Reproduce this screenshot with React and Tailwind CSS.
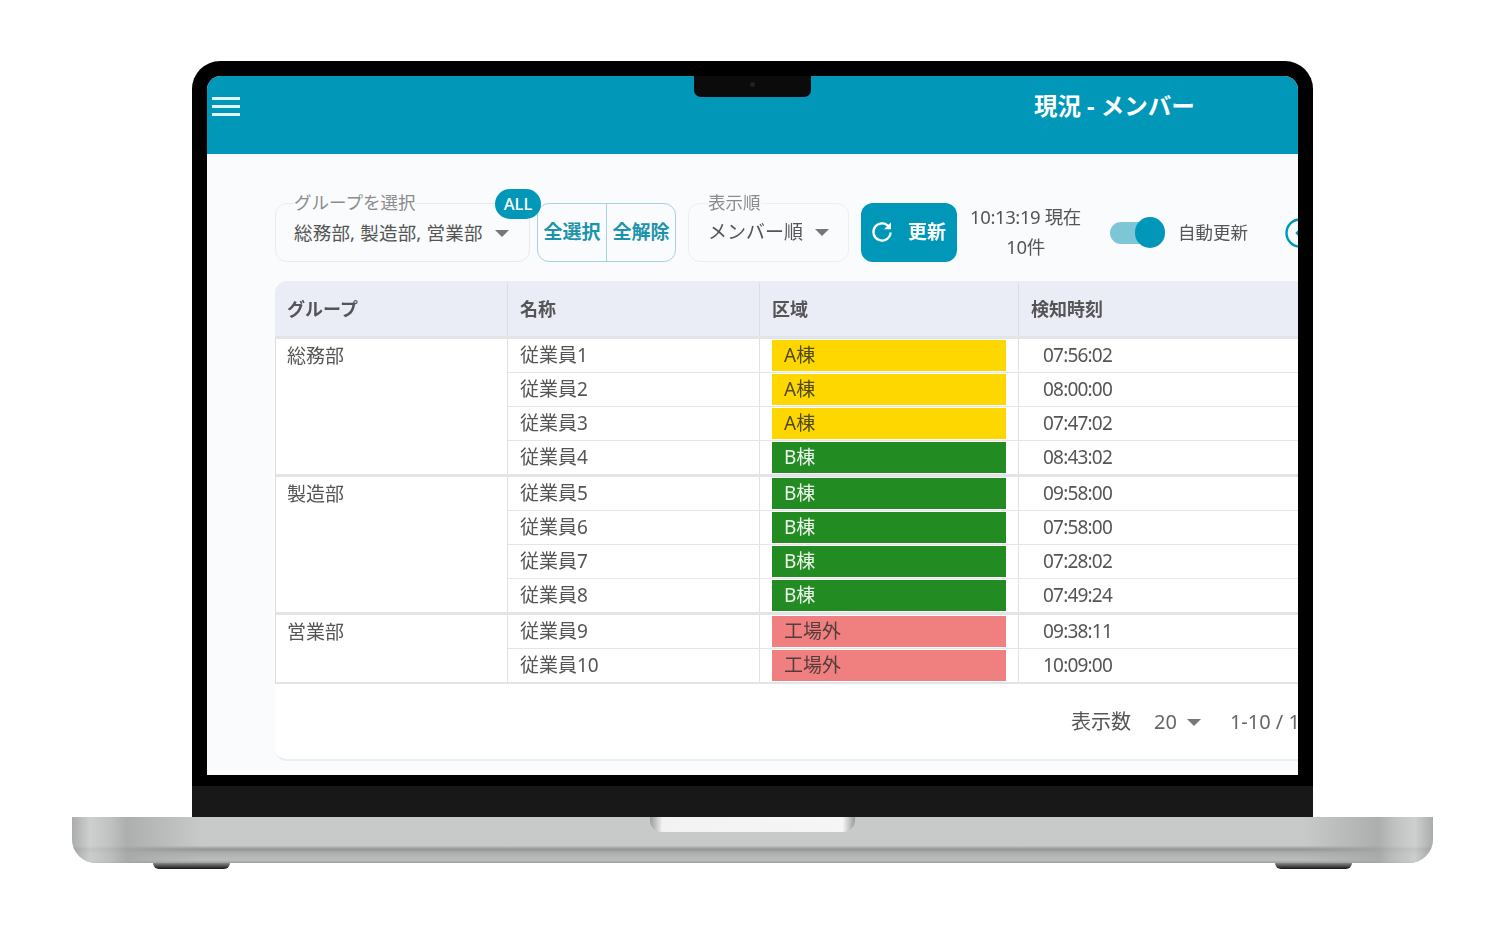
const rows = [
  { group: '総務部', items: [['従業員1','A棟','a','07:56:02'],['従業員2','A棟','a','08:00:00'],['従業員3','A棟','a','07:47:02'],['従業員4','B棟','b','08:43:02']] },
  { group: '製造部', items: [['従業員5','B棟','b','09:58:00'],['従業員6','B棟','b','07:58:00'],['従業員7','B棟','b','07:28:02'],['従業員8','B棟','b','07:49:24']] },
  { group: '営業部', items: [['従業員9','工場外','c','09:38:11'],['従業員10','工場外','c','10:09:00']] },
];

function Caret() {
  return <span className="block w-0 h-0 border-x-[7px] border-x-transparent border-t-[7px] border-t-[#777] shrink-0" />;
}

function Area({ kind, label }) {
  if (kind === 'a') return <div className="w-full h-full flex items-center pl-3 bg-[#ffd700] text-[#4f4a1e]">{label}</div>;
  if (kind === 'b') return <div className="w-full h-full flex items-center pl-3 bg-[#228b22] text-[#eef6ee]">{label}</div>;
  return <div className="w-full h-full flex items-center pl-3 bg-[#f08080] text-[#553c3c]">{label}</div>;
}

function Row({ item, last }) {
  return (
    <div className={`flex ${last ? 'h-[33px]' : 'h-[34px] border-b-[1.5px] border-[#e4e5e7]'}`}>
      <div className="w-[252px] shrink-0 pl-3 flex items-center border-r border-[#e0e1e4]">{item[0]}</div>
      <div className="w-[259px] shrink-0 px-3 pt-[1px] pb-[1px] border-r border-[#e0e1e4]"><Area kind={item[2]} label={item[1]} /></div>
      <div className="flex-1 pl-6 flex items-center tracking-[-0.8px]">{item[3]}</div>
    </div>
  );
}

export default function App() {
  return (
    <div className="w-[1506px] h-[928px] bg-white overflow-hidden pt-[61px] font-['Noto_Sans','Noto_Sans_CJK_JP',sans-serif]">
      <div className="relative ml-[192px] w-[1121px] bg-black rounded-t-[28px] pt-[15px]">
        <div className="mx-[15px] h-[699px] rounded-t-[14px] overflow-hidden bg-[#f9fbfc] text-[#555] text-[19px] blur-[0.5px]">
          <header className="h-[78px] bg-[#0097b8] relative flex items-start">
            <svg className="ml-[5px] mt-[21px]" width="28" height="20" viewBox="0 0 28 20" fill="#dff5f9">
              <rect x="0" y="0" width="28" height="3" /><rect x="0" y="8" width="28" height="3" /><rect x="0" y="16" width="28" height="3" />
            </svg>
            <div className="ml-[794px] mt-[15px] text-[23.5px] font-bold text-white whitespace-nowrap leading-[30px]">現況 - メンバー</div>
          </header>

          <div className="pl-[68px] pt-[49px] w-[1200px]">
            <div className="flex items-stretch h-[59px]">
              <div className="relative w-[255px] shrink-0 rounded-xl border border-[#e8eaec] flex items-center pl-[18px] pt-[1px] gap-3 text-[18.5px]">
                <span className="absolute left-[18px] -top-[13px] bg-[#f9fbfc] text-[17.5px] leading-[22px] text-[#8c8c8c] whitespace-nowrap">グループを選択</span>
                <span className="whitespace-nowrap tracking-[0.2px]">総務部, 製造部, 営業部</span>
                <Caret />
                <span className="absolute left-[219px] -top-[15px] w-[46px] h-[30px] pt-[1px] rounded-full bg-[#0097b8] text-white text-[16.5px] font-medium flex items-center justify-center">ALL</span>
              </div>
              <div className="ml-[7px] w-[139px] shrink-0 rounded-xl border border-[#a9d3da] flex text-[#1c93ab] font-bold text-[19px]">
                <div className="w-[69px] flex items-center justify-center border-r border-[#a9d3da]">全選択</div>
                <div className="flex-1 flex items-center justify-center">全解除</div>
              </div>
              <div className="relative ml-3 w-[161px] shrink-0 rounded-xl border border-[#eceef0] flex items-center pl-[19px] gap-3">
                <span className="absolute left-[19px] -top-[13px] bg-[#f9fbfc] text-[17.5px] leading-[22px] text-[#8c8c8c] whitespace-nowrap">表示順</span>
                <span className="whitespace-nowrap">メンバー順</span>
                <Caret />
              </div>
              <button className="ml-3 w-[96px] shrink-0 rounded-xl bg-[#0097b8] text-white font-bold flex items-center pl-[9px] gap-[14px]">
                <svg className="-mt-[3px]" width="24" height="24" viewBox="0 0 24 24" fill="none" stroke="#fff" strokeWidth="2.3"><path d="M19.2 8.2A8.6 8.6 0 1 0 20.6 13.5" /><path d="M21 3.2v7h-7z" fill="#fff" stroke="none" /></svg>
                <span className="whitespace-nowrap">更新</span>
              </button>
              <div className="ml-[13px] -mt-[1px] w-[111px] shrink-0 text-center text-[18.5px] leading-[30px] whitespace-nowrap tracking-[-0.4px]">
                <div>10:13:19 現在</div>
                <div>10件</div>
              </div>
              <div className="relative ml-[29px] w-[55px] shrink-0 flex items-center">
                <span className="w-[50px] h-[22px] rounded-full bg-[#7cc6d6]" />
                <span className="absolute left-[25px] top-[14px] w-[30px] h-[31px] rounded-full bg-[#0097b8]" />
              </div>
              <div className="ml-[13px] flex items-center text-[17.5px] whitespace-nowrap">自動更新</div>
              <div className="ml-[37px] flex items-center">
                <svg width="30" height="30" viewBox="0 0 30 30" fill="none" stroke="#0097b8" strokeWidth="2.4"><circle cx="15" cy="15" r="13.5" /><path d="M17 10l-5 5 5 5" /></svg>
              </div>
            </div>

            <div className="mt-[19px] h-[480px] bg-white rounded-xl border-b-2 border-[#eceef0] overflow-hidden">
              <div className="flex h-[58px] pt-[2px] bg-[#ebedf6] font-bold text-[18px] text-[#555] border-b-[3px] border-[#e3e4e8]">
                <div className="w-[233px] shrink-0 pl-3 flex items-center border-r border-[#dcdde3]">グループ</div>
                <div className="w-[252px] shrink-0 pl-3 flex items-center border-r border-[#dcdde3]">名称</div>
                <div className="w-[259px] shrink-0 pl-3 flex items-center border-r border-[#dcdde3]">区域</div>
                <div className="flex-1 pl-3 flex items-center">検知時刻</div>
              </div>
              {rows.map((g, gi) => (
                <div key={g.group} className={`flex border-l border-[#dcdde0] ${gi < 2 ? 'border-b-[3px]' : 'border-b-2'} border-b-[#e3e4e6]`}>
                  <div className="w-[232px] shrink-0 pl-[11px] pt-[3px] border-r border-[#e0e1e4] leading-[28px]">{g.group}</div>
                  <div className="flex-1">
                    {g.items.map((it, i) => <Row key={it[0]} item={it} last={i === g.items.length - 1} />)}
                  </div>
                </div>
              ))}
              <div className="flex items-center h-[74px] pt-[2px] pl-[796px] text-[20px] text-[#555] whitespace-nowrap">
                <span>表示数</span>
                <span className="ml-[23px] text-[#666]">20</span>
                <span className="ml-[10px]"><Caret /></span>
                <span className="ml-[29px] text-[#666]">1-10 / 10</span>
              </div>
            </div>
          </div>
        </div>

        <div className="absolute top-[15px] left-[502px] w-[117px] h-[21px] bg-[#0b0b0b] rounded-b-[7px] flex justify-center pt-[6px]">
          <span className="w-[5px] h-[5px] rounded-full bg-[#1f2226]" />
        </div>

        <div className="h-[11px] bg-black" />
        <div className="h-[31px] bg-[#181818]" />
      </div>

      <div className="relative ml-[72px] w-[1361px] h-[46px] rounded-b-[24px] overflow-hidden bg-[linear-gradient(to_bottom,#c8c9c9_0%,#c8c9c9_62%,#939494_70%,#adaeae_78%,#bcbdbd_94%,#9a9b9b_100%)]">
        <div className="absolute inset-y-0 left-0 w-[130px] bg-[linear-gradient(to_right,#a3a4a4_0%,#d0d1d1_14%,#bdbebe_30%,#a6a7a7_42%,transparent_100%)] opacity-80" />
        <div className="absolute inset-y-0 right-0 w-[130px] bg-[linear-gradient(to_left,#a3a4a4_0%,#d0d1d1_14%,#bdbebe_30%,#a6a7a7_42%,transparent_100%)] opacity-80" />
        <div className="absolute top-0 left-[578px] w-[205px] h-[15px] rounded-b-[12px] bg-[linear-gradient(to_right,#9a9a9a_0%,#f2f2f2_6%,#f6f6f6_94%,#9a9a9a_100%)]" />
      </div>
      <div className="flex justify-between ml-[153px] w-[1199px]">
        <div className="w-[77px] h-[6px] rounded-b-[10px] bg-[linear-gradient(to_bottom,#8a8a8a,#151515)]" />
        <div className="w-[77px] h-[6px] rounded-b-[10px] bg-[linear-gradient(to_bottom,#8a8a8a,#151515)]" />
      </div>
    </div>
  );
}
